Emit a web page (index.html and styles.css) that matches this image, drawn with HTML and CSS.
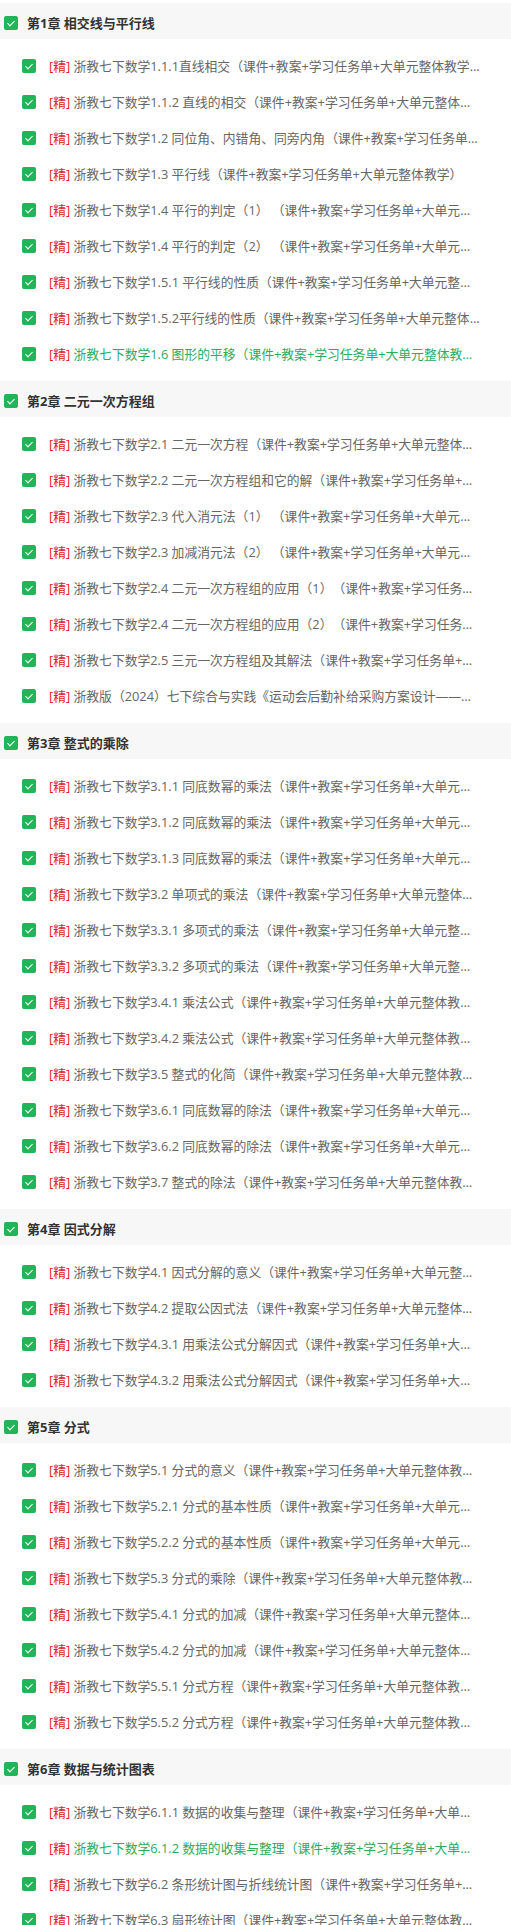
FILE: index.html
```html
<!DOCTYPE html>
<html lang="zh-CN">
<head>
    <meta charset="UTF-8">
    <meta name="viewport" content="width=device-width, initial-scale=1.0">
    <title>浙教七下数学 目录</title>
    <link rel="stylesheet" href="styles.css">
</head>
<body>
    <div class="catalog">
        <!-- 第1章 -->
        <section class="chapter">
            <div class="chapter-title"><span class="check"></span>第1章 相交线与平行线</div>
            <ul class="lessons">
                <li class="lesson"><span class="check"></span><span class="lesson-name"><em class="tag">[精]</em> 浙教七下数学1.1.1直线相交（课件+教案+学习任务单+大单元整体教学）</span></li>
                <li class="lesson"><span class="check"></span><span class="lesson-name"><em class="tag">[精]</em> 浙教七下数学1.1.2 直线的相交（课件+教案+学习任务单+大单元整体教学）</span></li>
                <li class="lesson"><span class="check"></span><span class="lesson-name"><em class="tag">[精]</em> 浙教七下数学1.2 同位角、内错角、同旁内角（课件+教案+学习任务单+大单元整体教学）</span></li>
                <li class="lesson"><span class="check"></span><span class="lesson-name"><em class="tag">[精]</em> 浙教七下数学1.3 平行线（课件+教案+学习任务单+大单元整体教学）</span></li>
                <li class="lesson"><span class="check"></span><span class="lesson-name"><em class="tag">[精]</em> 浙教七下数学1.4 平行的判定（1） （课件+教案+学习任务单+大单元整体教学）</span></li>
                <li class="lesson"><span class="check"></span><span class="lesson-name"><em class="tag">[精]</em> 浙教七下数学1.4 平行的判定（2） （课件+教案+学习任务单+大单元整体教学）</span></li>
                <li class="lesson"><span class="check"></span><span class="lesson-name"><em class="tag">[精]</em> 浙教七下数学1.5.1 平行线的性质（课件+教案+学习任务单+大单元整体教学）</span></li>
                <li class="lesson"><span class="check"></span><span class="lesson-name"><em class="tag">[精]</em> 浙教七下数学1.5.2平行线的性质（课件+教案+学习任务单+大单元整体教学）</span></li>
                <li class="lesson active"><span class="check"></span><span class="lesson-name"><em class="tag">[精]</em> 浙教七下数学1.6 图形的平移（课件+教案+学习任务单+大单元整体教学）</span></li>
            </ul>
        </section>

        <!-- 第2章 -->
        <section class="chapter">
            <div class="chapter-title"><span class="check"></span>第2章 二元一次方程组</div>
            <ul class="lessons">
                <li class="lesson"><span class="check"></span><span class="lesson-name"><em class="tag">[精]</em> 浙教七下数学2.1 二元一次方程（课件+教案+学习任务单+大单元整体教学）</span></li>
                <li class="lesson"><span class="check"></span><span class="lesson-name"><em class="tag">[精]</em> 浙教七下数学2.2 二元一次方程组和它的解（课件+教案+学习任务单+大单元整体教学）</span></li>
                <li class="lesson"><span class="check"></span><span class="lesson-name"><em class="tag">[精]</em> 浙教七下数学2.3 代入消元法（1） （课件+教案+学习任务单+大单元整体教学）</span></li>
                <li class="lesson"><span class="check"></span><span class="lesson-name"><em class="tag">[精]</em> 浙教七下数学2.3 加减消元法（2） （课件+教案+学习任务单+大单元整体教学）</span></li>
                <li class="lesson"><span class="check"></span><span class="lesson-name"><em class="tag">[精]</em> 浙教七下数学2.4 二元一次方程组的应用（1）（课件+教案+学习任务单+大单元整体教学）</span></li>
                <li class="lesson"><span class="check"></span><span class="lesson-name"><em class="tag">[精]</em> 浙教七下数学2.4 二元一次方程组的应用（2）（课件+教案+学习任务单+大单元整体教学）</span></li>
                <li class="lesson"><span class="check"></span><span class="lesson-name"><em class="tag">[精]</em> 浙教七下数学2.5 三元一次方程组及其解法（课件+教案+学习任务单+大单元整体教学）</span></li>
                <li class="lesson"><span class="check"></span><span class="lesson-name"><em class="tag">[精]</em> 浙教版（2024）七下综合与实践《运动会后勤补给采购方案设计——方程组的应用》</span></li>
            </ul>
        </section>

        <!-- 第3章 -->
        <section class="chapter">
            <div class="chapter-title"><span class="check"></span>第3章 整式的乘除</div>
            <ul class="lessons">
                <li class="lesson"><span class="check"></span><span class="lesson-name"><em class="tag">[精]</em> 浙教七下数学3.1.1 同底数幂的乘法（课件+教案+学习任务单+大单元整体教学）</span></li>
                <li class="lesson"><span class="check"></span><span class="lesson-name"><em class="tag">[精]</em> 浙教七下数学3.1.2 同底数幂的乘法（课件+教案+学习任务单+大单元整体教学）</span></li>
                <li class="lesson"><span class="check"></span><span class="lesson-name"><em class="tag">[精]</em> 浙教七下数学3.1.3 同底数幂的乘法（课件+教案+学习任务单+大单元整体教学）</span></li>
                <li class="lesson"><span class="check"></span><span class="lesson-name"><em class="tag">[精]</em> 浙教七下数学3.2 单项式的乘法（课件+教案+学习任务单+大单元整体教学）</span></li>
                <li class="lesson"><span class="check"></span><span class="lesson-name"><em class="tag">[精]</em> 浙教七下数学3.3.1 多项式的乘法（课件+教案+学习任务单+大单元整体教学）</span></li>
                <li class="lesson"><span class="check"></span><span class="lesson-name"><em class="tag">[精]</em> 浙教七下数学3.3.2 多项式的乘法（课件+教案+学习任务单+大单元整体教学）</span></li>
                <li class="lesson"><span class="check"></span><span class="lesson-name"><em class="tag">[精]</em> 浙教七下数学3.4.1 乘法公式（课件+教案+学习任务单+大单元整体教学）</span></li>
                <li class="lesson"><span class="check"></span><span class="lesson-name"><em class="tag">[精]</em> 浙教七下数学3.4.2 乘法公式（课件+教案+学习任务单+大单元整体教学）</span></li>
                <li class="lesson"><span class="check"></span><span class="lesson-name"><em class="tag">[精]</em> 浙教七下数学3.5 整式的化简（课件+教案+学习任务单+大单元整体教学）</span></li>
                <li class="lesson"><span class="check"></span><span class="lesson-name"><em class="tag">[精]</em> 浙教七下数学3.6.1 同底数幂的除法（课件+教案+学习任务单+大单元整体教学）</span></li>
                <li class="lesson"><span class="check"></span><span class="lesson-name"><em class="tag">[精]</em> 浙教七下数学3.6.2 同底数幂的除法（课件+教案+学习任务单+大单元整体教学）</span></li>
                <li class="lesson"><span class="check"></span><span class="lesson-name"><em class="tag">[精]</em> 浙教七下数学3.7 整式的除法（课件+教案+学习任务单+大单元整体教学）</span></li>
            </ul>
        </section>

        <!-- 第4章 -->
        <section class="chapter">
            <div class="chapter-title"><span class="check"></span>第4章 因式分解</div>
            <ul class="lessons">
                <li class="lesson"><span class="check"></span><span class="lesson-name"><em class="tag">[精]</em> 浙教七下数学4.1 因式分解的意义（课件+教案+学习任务单+大单元整体教学）</span></li>
                <li class="lesson"><span class="check"></span><span class="lesson-name"><em class="tag">[精]</em> 浙教七下数学4.2 提取公因式法（课件+教案+学习任务单+大单元整体教学）</span></li>
                <li class="lesson"><span class="check"></span><span class="lesson-name"><em class="tag">[精]</em> 浙教七下数学4.3.1 用乘法公式分解因式（课件+教案+学习任务单+大单元整体教学）</span></li>
                <li class="lesson"><span class="check"></span><span class="lesson-name"><em class="tag">[精]</em> 浙教七下数学4.3.2 用乘法公式分解因式（课件+教案+学习任务单+大单元整体教学）</span></li>
            </ul>
        </section>

        <!-- 第5章 -->
        <section class="chapter">
            <div class="chapter-title"><span class="check"></span>第5章 分式</div>
            <ul class="lessons">
                <li class="lesson"><span class="check"></span><span class="lesson-name"><em class="tag">[精]</em> 浙教七下数学5.1 分式的意义（课件+教案+学习任务单+大单元整体教学）</span></li>
                <li class="lesson"><span class="check"></span><span class="lesson-name"><em class="tag">[精]</em> 浙教七下数学5.2.1 分式的基本性质（课件+教案+学习任务单+大单元整体教学）</span></li>
                <li class="lesson"><span class="check"></span><span class="lesson-name"><em class="tag">[精]</em> 浙教七下数学5.2.2 分式的基本性质（课件+教案+学习任务单+大单元整体教学）</span></li>
                <li class="lesson"><span class="check"></span><span class="lesson-name"><em class="tag">[精]</em> 浙教七下数学5.3 分式的乘除（课件+教案+学习任务单+大单元整体教学）</span></li>
                <li class="lesson"><span class="check"></span><span class="lesson-name"><em class="tag">[精]</em> 浙教七下数学5.4.1 分式的加减（课件+教案+学习任务单+大单元整体教学）</span></li>
                <li class="lesson"><span class="check"></span><span class="lesson-name"><em class="tag">[精]</em> 浙教七下数学5.4.2 分式的加减（课件+教案+学习任务单+大单元整体教学）</span></li>
                <li class="lesson"><span class="check"></span><span class="lesson-name"><em class="tag">[精]</em> 浙教七下数学5.5.1 分式方程（课件+教案+学习任务单+大单元整体教学）</span></li>
                <li class="lesson"><span class="check"></span><span class="lesson-name"><em class="tag">[精]</em> 浙教七下数学5.5.2 分式方程（课件+教案+学习任务单+大单元整体教学）</span></li>
            </ul>
        </section>

        <!-- 第6章 -->
        <section class="chapter">
            <div class="chapter-title"><span class="check"></span>第6章 数据与统计图表</div>
            <ul class="lessons">
                <li class="lesson"><span class="check"></span><span class="lesson-name"><em class="tag">[精]</em> 浙教七下数学6.1.1 数据的收集与整理（课件+教案+学习任务单+大单元整体教学）</span></li>
                <li class="lesson active"><span class="check"></span><span class="lesson-name"><em class="tag">[精]</em> 浙教七下数学6.1.2 数据的收集与整理（课件+教案+学习任务单+大单元整体教学）</span></li>
                <li class="lesson"><span class="check"></span><span class="lesson-name"><em class="tag">[精]</em> 浙教七下数学6.2 条形统计图与折线统计图（课件+教案+学习任务单+大单元整体教学）</span></li>
                <li class="lesson"><span class="check"></span><span class="lesson-name"><em class="tag">[精]</em> 浙教七下数学6.3 扇形统计图（课件+教案+学习任务单+大单元整体教学）</span></li>
            </ul>
        </section>
    </div>
</body>
</html>
```

FILE: styles.css
```css
* {
    margin: 0;
    padding: 0;
    box-sizing: border-box;
}

body {
    background-color: #fff;
    font-family: "Open Sans", "Noto Sans CJK SC", sans-serif;
    font-size: 13px;
    color: #666;
    padding-top: 3px;
    text-spacing-trim: space-all;
}

.catalog {
    width: 100%;
}

.chapter-title {
    display: flex;
    align-items: center;
    height: 36px;
    padding: 4px 0 0 4px;
    background-color: #f7f7f7;
    color: #333;
    font-weight: 700;
    line-height: 14px;
}

.chapter-title .check {
    margin-right: 9px;
}

.lessons {
    list-style: none;
    padding: 9px 30px 9px 22px;
}

.lesson {
    display: flex;
    align-items: center;
    height: 36px;
    font-size: 12.8px;
    line-height: 14px;
}

.lesson .check {
    margin-right: 13px;
}

.lesson-name {
    flex: 1;
    min-width: 0;
    white-space: nowrap;
    overflow: hidden;
    text-overflow: ellipsis;
}

.lesson.active .lesson-name {
    color: #2bab5e;
}

.tag {
    font-style: normal;
    color: #e02020;
}

/* green checked box */
.check {
    position: relative;
    flex-shrink: 0;
    width: 14px;
    height: 14px;
    border-radius: 2px;
    background-color: #21b459;
}

.check::after {
    content: "";
    position: absolute;
    left: 5px;
    top: 3px;
    width: 3px;
    height: 6px;
    border-right: 1.5px solid #fff;
    border-bottom: 1.5px solid #fff;
    transform: rotate(45deg);
}
```
